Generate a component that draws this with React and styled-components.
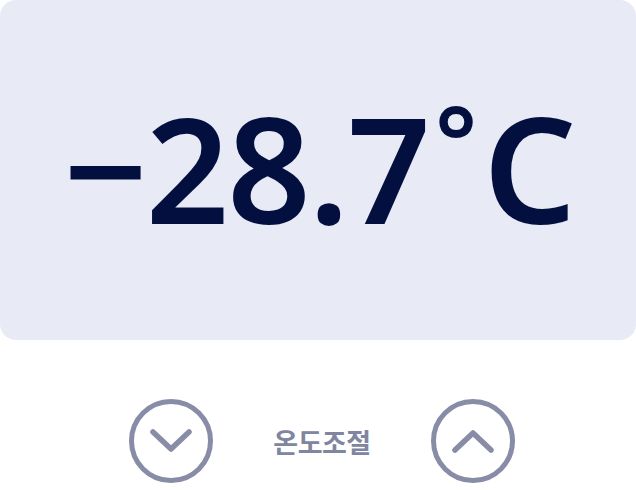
import styled, { createGlobalStyle } from "styled-components";

const GlobalStyle = createGlobalStyle`
  body {
    margin: 0;
    background: #ffffff;
    font-family: "Noto Sans", "Noto Sans CJK KR", sans-serif;
  }
`;

const Wrapper = styled.div`
  width: 636px;
  height: 490px;
  display: flex;
  flex-direction: column;
`;

const Display = styled.div`
  height: 340px;
  border-radius: 16px;
  background: #e8ebf5;
  display: flex;
  align-items: center;
  justify-content: center;
`;

const Temperature = styled.span`
  font-family: "Noto Sans", sans-serif;
  font-size: 146px;
  font-weight: 600;
  color: #03103f;
  letter-spacing: -2px;
  line-height: 1;
  margin-top: -4px;
  margin-left: 2px;
`;

const Degree = styled.span`
  font-size: 100px;
  position: relative;
  top: -46px;
  margin: 0 8px 0 6px;
`;

const Controls = styled.div`
  flex: 1;
  display: flex;
  align-items: center;
  justify-content: center;
  gap: 60px;
  padding-left: 8px;
  padding-top: 52px;
`;

const RoundButton = styled.button`
  width: 84px;
  height: 84px;
  border-radius: 50%;
  border: 5px solid #888ca6;
  background: transparent;
  display: flex;
  align-items: center;
  justify-content: center;
  padding: 0;
  cursor: pointer;
`;

const Label = styled.span`
  font-family: "Noto Sans CJK KR", sans-serif;
  font-size: 27px;
  font-weight: 700;
  color: #80869f;
  letter-spacing: -0.5px;
`;

function Chevron({ up }) {
  return (
    <svg width="44" height="28" viewBox="0 0 44 28" fill="none">
      <path
        d={up ? "M4 23 L22 6 L40 23" : "M4 5 L22 22 L40 5"}
        stroke="#888ca6"
        strokeWidth="5.5"
        strokeLinecap="round"
        strokeLinejoin="round"
      />
    </svg>
  );
}

export default function App() {
  return (
    <>
      <GlobalStyle />
      <Wrapper>
        <Display>
          <Temperature>
            −28.7<Degree>°</Degree>C
          </Temperature>
        </Display>
        <Controls>
          <RoundButton aria-label="down">
            <Chevron />
          </RoundButton>
          <Label>온도조절</Label>
          <RoundButton aria-label="up">
            <Chevron up />
          </RoundButton>
        </Controls>
      </Wrapper>
    </>
  );
}
